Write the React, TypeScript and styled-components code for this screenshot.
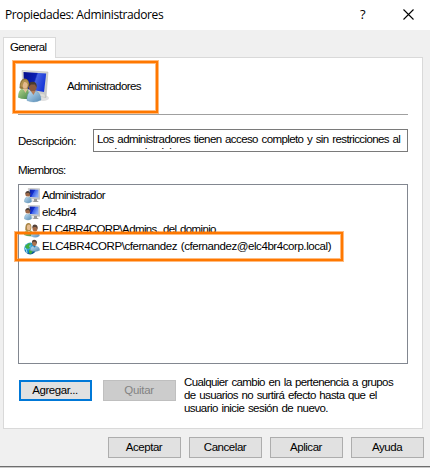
import React from 'react';
import styled, { createGlobalStyle } from 'styled-components';

const GlobalStyle = createGlobalStyle`
  * { box-sizing: border-box; }
  body { margin: 0; background: #f0f0f0; overflow: hidden; }
`;

const Dialog = styled.main`
  position: relative;
  width: 430px;
  height: 468px;
  display: flex;
  flex-direction: column;
  overflow: hidden;
  background: #f0f0f0;
  color: #000;
  font: 11.5px/13px 'Liberation Sans', Arial, sans-serif;
  white-space: nowrap;
`;

const TitleBar = styled.header`
  display: flex;
  align-items: center;
  flex: none;
  height: 30px;
  padding: 0 16px 2px 5px;
  background: #fff;
`;

const Title = styled.h1`
  flex: 1;
  margin: 0;
  padding-top: 2px;
  font: 12px/16px 'Open Sans', 'Noto Sans', sans-serif;
  letter-spacing: -0.4px;
`;

const HelpMark = styled.span`
  width: 7px;
  margin-right: 36px;
  font: 13px/16px 'Open Sans', sans-serif;
`;

const Label = styled.span<{ $track?: number }>`
  letter-spacing: ${p => p.$track ?? -0.45}px;
  word-spacing: 1px;
`;

const TabStrip = styled.nav`
  display: flex;
  align-items: flex-end;
  flex: none;
  height: 27px;
  padding-left: 3px;
`;

const Tab = styled.div`
  position: relative;
  z-index: 1;
  width: 53px;
  height: 21px;
  margin-bottom: -1px;
  padding: 3px 0 0 6px;
  border: 1px solid #d9d9d9;
  border-bottom: 0;
  background: #fff;
`;

const Page = styled.section`
  flex: none;
  width: 420px;
  height: 372px;
  margin-left: 3px;
  padding: 0 14px;
  border: 1px solid #d9d9d9;
  background: #fff;
`;

const GroupHeader = styled.div`
  display: flex;
  align-items: center;
  gap: 17px;
  height: 57px;
  border-bottom: 1px solid #a0a0a0;
`;

const Description = styled.div`
  display: flex;
  justify-content: space-between;
  margin-top: 14px;
  height: 23px;
  line-height: 24px;
`;

const Field = styled.div`
  width: 315px;
  height: 23px;
  padding: 3px;
  border: 1px solid #7a7a7a;
`;

const FieldText = styled.div`
  height: 16px;
  overflow: hidden;
  line-height: 13px;
`;

const MembersLabel = styled.div`
  height: 32px;
  padding-top: 12px;
`;

const MemberList = styled.ul`
  width: 390px;
  height: 180px;
  margin: 0;
  padding: 2px 5px;
  border: 1px solid #828790;
  list-style: none;
`;

const Member = styled.li`
  display: flex;
  align-items: center;
  gap: 2px;
  height: 17px;
`;

const Actions = styled.div`
  display: flex;
  gap: 11px;
  padding: 11px 0 0 1px;
`;

const Note = styled.p`
  margin: 1px 0 0 -3px;
  line-height: 13px;
`;

const Button = styled.button<{ $kind?: 'default' | 'disabled' }>`
  width: 73px;
  height: 21px;
  margin-top: ${p => (p.$kind ? '5px' : '0')};
  padding: 0 1px 0 0;
  border: ${p => (p.$kind === 'default' ? '2px solid #0078d7' : `1px solid ${p.$kind ? '#bfbfbf' : '#adadad'}`)};
  background: ${p => (p.$kind === 'disabled' ? '#cccccc' : '#e1e1e1')};
  color: ${p => (p.$kind === 'disabled' ? '#838383' : '#000')};
  font: inherit;
`;

const Footer = styled.footer`
  display: flex;
  gap: 8px;
  flex: none;
  height: 37px;
  padding: 8px 0 0 108px;
`;

const BottomEdge = styled.div`
  flex: none;
  height: 2px;
  border-top: 1px solid #6e6e6e;
  background: #c9c9c9;
`;

const Highlight = styled.div<{ $x: number; $y: number; $w: number; $h: number }>`
  position: absolute;
  z-index: 2;
  left: ${p => p.$x}px;
  top: ${p => p.$y}px;
  width: ${p => p.$w}px;
  height: ${p => p.$h}px;
  border: 2px solid #ff7800;
  box-shadow: 0 0 0 1px #ff780080, inset 0 0 0 1px #ff780080;
`;

const Defs = styled.svg`
  position: absolute;
`;

const Gradients = () => (
  <Defs width="0" height="0" aria-hidden>
    <defs>
      <linearGradient id="screen" x1="0" y1="0" x2="1" y2=".5">
        <stop offset="0" stopColor="#0719a5" /><stop offset=".48" stopColor="#1732cc" />
        <stop offset=".55" stopColor="#3f62ea" /><stop offset="1" stopColor="#86a8f5" />
      </linearGradient>
      <linearGradient id="bigScreen" x1="0" y1=".2" x2="1" y2=".5">
        <stop offset="0" stopColor="#050f8e" /><stop offset=".5" stopColor="#0b20b4" />
        <stop offset=".56" stopColor="#4460e0" /><stop offset="1" stopColor="#1434d8" />
      </linearGradient>
      <linearGradient id="frame" x1="0" y1="0" x2="1" y2="1">
        <stop stopColor="#e6e6dc" /><stop offset="1" stopColor="#c2c4c4" />
      </linearGradient>
      <linearGradient id="blueShirt" x1="0" y1="0" x2="1" y2="1">
        <stop stopColor="#c4e1f5" /><stop offset="1" stopColor="#5489b4" />
      </linearGradient>
      <linearGradient id="greenShirt" x1="0" y1="0" x2="1" y2="1">
        <stop stopColor="#b6d68b" /><stop offset="1" stopColor="#438447" />
      </linearGradient>
      <radialGradient id="globe" cx=".35" cy=".3" r=".75">
        <stop stopColor="#82d5f6" /><stop offset=".5" stopColor="#198fc8" /><stop offset="1" stopColor="#064d91" />
      </radialGradient>
    </defs>
  </Defs>
);

const GroupIcon = () => (
  <svg width="32" height="34" viewBox="0 0 32 34">
    <ellipse cx="25" cy="29" rx="6" ry="3" fill="#777" opacity=".22" />
    <path d="M4 1.5 30 3 28 28.5 5 24Z" fill="url(#frame)" stroke="#b5b5b0" strokeWidth=".5" />
    <path d="M5.5 3 28.2 4.6 26 23 6 19.5Z" fill="url(#bigScreen)" />
    <path d="M5 22 26.6 25.5 27 28 20 27Z" fill="#deded8" />
    <path d="M1.5 19Q1.5 10 6.5 9.5Q11.2 9.5 11.2 16L10 20H3Z" fill="#94783c" />
    <ellipse cx="7" cy="15.5" rx="2.8" ry="4" fill="#e4b98c" />
    <path d="M2.4 17Q3.6 10 8 11Q11 12 10.3 16.5Q9 12.5 6 13L4 18Z" fill="#b2924f" />
    <path d="M0 28.5Q0 21.5 4 19.5L7.5 22.5 10 20 12 29.5Q5 31 0 28.5Z" fill="url(#greenShirt)" />
    <path d="M5 19.5 7.5 24 9.5 19.5Z" fill="#e3be96" />
    <ellipse cx="14.8" cy="18.2" rx="3.8" ry="4.8" fill="#8c5c3f" />
    <path d="M10.9 17.5Q10.3 12.7 14.5 12.7Q19.5 12.7 18.5 18.5L17 15.5H13Z" fill="#493b31" />
    <path d="M9 31.5Q8.7 24.5 12.5 22L15.5 24.5 18 22Q22.8 24 23 31Q16 34.5 9 31.5Z" fill="url(#blueShirt)" stroke="#5b91b5" strokeWidth=".4" />
    <path d="M12.8 22 15.5 26 17.5 22Z" fill="#b77a54" />
  </svg>
);

const UserIcon = () => (
  <svg width="16" height="16" viewBox="0 0 16 16">
    <path d="M4.3 .4 15.7 .8V11.3L5 10.8Z" fill="url(#frame)" stroke="#aaa" strokeWidth=".5" />
    <path d="M5.6 1.5 14.5 1.8V9.6L6 9Z" fill="url(#screen)" />
    <path d="M10 11v1.8H7.5L10 14h5l-2-1.2V11Z" fill="#999" />
    <circle cx="3.8" cy="6" r="2.5" fill="#9d6747" />
    <path d="M1.2 5.8Q1.6 2.9 4 3.1Q7.2 4 5.9 7L5 5H3Z" fill="#4b403b" />
    <path d="M.3 13.8Q.5 9.7 2.8 9L4 10 5.4 9Q7.8 10.2 7.6 13.8Q4 16.4 .3 13.8Z" fill="url(#blueShirt)" stroke="#6f9fbc" strokeWidth=".4" />
  </svg>
);

const PeopleIcon = () => (
  <svg width="16" height="16" viewBox="0 0 16 16">
    <path d="M1.3 8Q1 1 4.3 1Q7.6 1 7.4 6L6.5 9H2.2Z" fill="#a78443" />
    <ellipse cx="4.8" cy="5.4" rx="1.9" ry="2.8" fill="#e6bd91" />
    <path d="M0 13Q0 9 3 8.5L5 10 7 8.5Q9 10 9 14Q4 15 0 13Z" fill="url(#greenShirt)" />
    <ellipse cx="11" cy="6.2" rx="2.5" ry="3.2" fill="#a36b48" />
    <path d="M8.4 6Q8.2 2.6 11 2.6Q14 3 13.5 7L12 5H10Z" fill="#54433b" />
    <path d="M7 14Q7 10.5 9.5 9.5L11 11 13 9.5Q16 11 15.5 14Q11 17 7 14Z" fill="url(#blueShirt)" />
  </svg>
);

const DomainIcon = () => (
  <svg width="16" height="16" viewBox="0 0 16 16">
    <circle cx="6.2" cy="9.5" r="5.9" fill="url(#globe)" />
    <path d="M1 7 5 4 7 5 5 7 6 9 4 10 2 9ZM5 11l3-1 1 2-2 3-2-1Z" fill="#3fae3f" />
    <path d="M1 9Q3 11 3 14" stroke="#b7edf6" strokeWidth="1" fill="none" />
    <ellipse cx="10.4" cy="4" rx="2.3" ry="3" fill="#ad724c" />
    <path d="M8 4Q7.8.8 10.3.7Q13.6 1 12.7 5L11.3 2.8H9.6Z" fill="#554238" />
    <path d="M6.2 11.3Q6.3 8 8.8 7L10.5 8.5 12.3 7Q15.7 8 15.7 11.3Q11 13.8 6.2 11.3Z" fill="url(#blueShirt)" stroke="#6b99b8" strokeWidth=".3" />
  </svg>
);

const CloseIcon = () => (
  <svg width="11" height="11" viewBox="0 0 11 11">
    <path d="M.5.5 10.5 10.5M10.5.5.5 10.5" stroke="#000" strokeWidth="1.1" />
  </svg>
);

const members = [
  { name: 'Administrador', Icon: UserIcon, track: -0.62 },
  { name: 'elc4br4', Icon: UserIcon, track: -0.5 },
  { name: 'ELC4BR4CORP\\Admins. del dominio', Icon: PeopleIcon, track: -0.62 },
  { name: 'ELC4BR4CORP\\cfernandez (cfernandez@elc4br4corp.local)', Icon: DomainIcon, track: -0.43 },
];

export default function App() {
  return (
    <>
      <GlobalStyle />
      <Gradients />
      <Dialog>
        <TitleBar>
          <Title>Propiedades: Administradores</Title>
          <HelpMark>?</HelpMark>
          <CloseIcon />
        </TitleBar>
        <TabStrip><Tab><Label $track={-0.65}>General</Label></Tab></TabStrip>
        <Page>
          <GroupHeader><GroupIcon /><Label $track={-0.62}>Administradores</Label></GroupHeader>
          <Description>
            <Label>Descripción:</Label>
            <Field>
              <FieldText>
                <Label $track={-0.6}>Los administradores tienen acceso completo y sin restricciones al<br />equipo o dominio</Label>
              </FieldText>
            </Field>
          </Description>
          <MembersLabel><Label $track={-0.68}>Miembros:</Label></MembersLabel>
          <MemberList>
            {members.map(({ name, Icon, track }) => (
              <Member key={name}><Icon /><Label $track={track}>{name}</Label></Member>
            ))}
          </MemberList>
          <Actions>
            <Button $kind="default"><Label>Agregar...</Label></Button>
            <Button $kind="disabled"><Label $track={-0.3}>Quitar</Label></Button>
            <Note>
              <Label $track={-0.6}>Cualquier cambio en la pertenencia a grupos</Label><br />
              <Label $track={-0.6}>de usuarios no surtirá efecto hasta que el</Label><br />
              <Label $track={-0.56}>usuario inicie sesión de nuevo.</Label>
            </Note>
          </Actions>
        </Page>
        <Footer>
          <Button><Label>Aceptar</Label></Button>
          <Button><Label>Cancelar</Label></Button>
          <Button><Label>Aplicar</Label></Button>
          <Button><Label>Ayuda</Label></Button>
        </Footer>
        <BottomEdge />
        <Highlight $x={13} $y={61} $w={145} $h={52} />
        <Highlight $x={15} $y={232} $w={328} $h={29} />
      </Dialog>
    </>
  );
}
